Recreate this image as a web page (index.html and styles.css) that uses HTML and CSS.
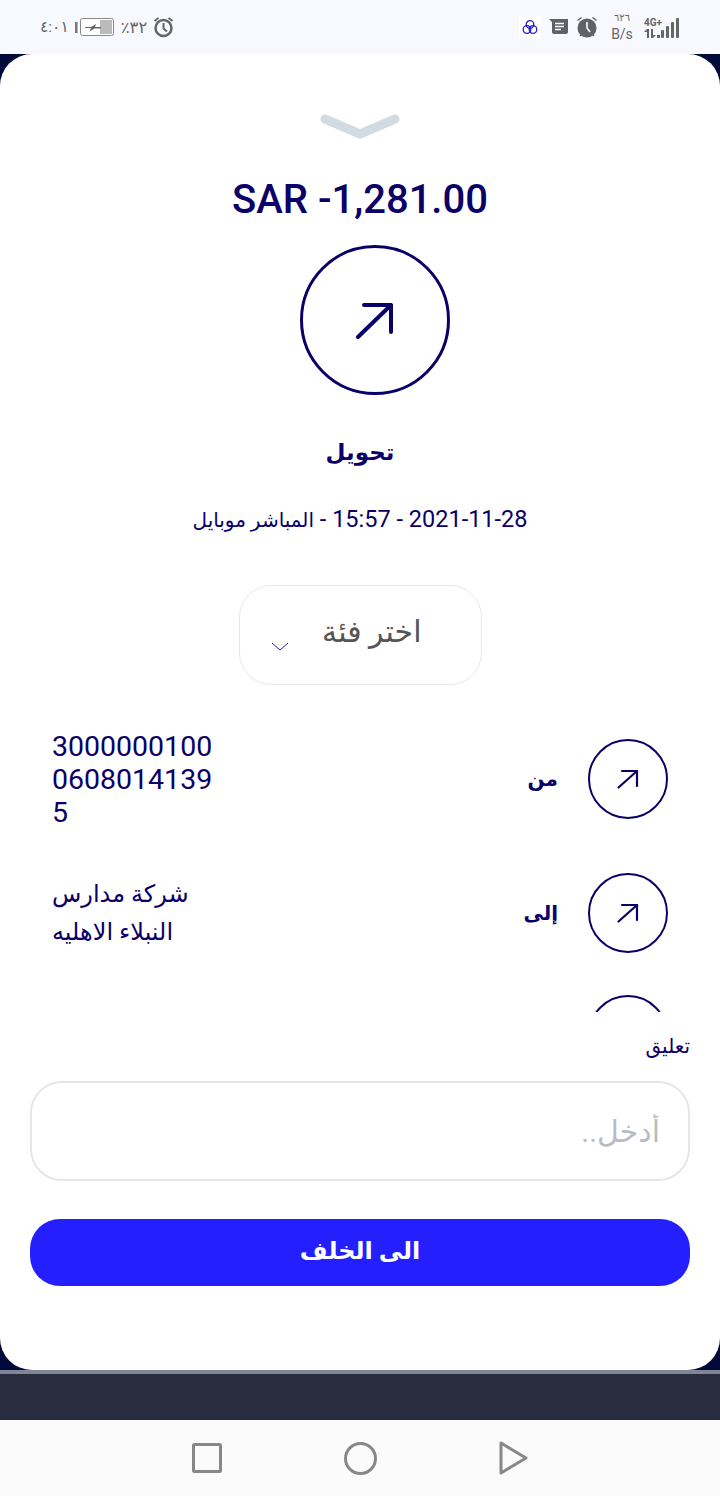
FILE: index.html
```html
<!DOCTYPE html>
<html lang="ar">

<head>
    <meta charset="UTF-8">
    <meta name="viewport" content="width=device-width, initial-scale=1.0">
    <title>تحويل</title>
    <link rel="stylesheet" href="styles.css">
</head>

<body>
    <div class="status-bar">
        <div class="status-left">
            <span class="status-time">٤:٠١</span>
            <svg class="battery" width="40" height="20" viewBox="0 0 40 20">
                <rect x="0" y="5" width="2.500" height="11" fill="#777"/>
                <rect x="5.500" y="1.500" width="33" height="17" rx="2" fill="#fff" stroke="#888" stroke-width="1"/>
                <rect x="25" y="3" width="12" height="14" fill="#bbb"/>
                <path d="M10 10h6l5-3-1 3h6v1.500h-6.500l-5 3 1.500-3.500h-6z" fill="#666"/>
            </svg>
            <span class="status-percent">٪٣٢</span>
            <svg width="21" height="22" viewBox="0 0 21 22" fill="none" stroke="#666">
                <circle cx="10.500" cy="12" r="8" stroke-width="2.500"/>
                <path d="M10.500 7v5.500l3.500 3" stroke-width="2"/>
                <path d="M1.500 5l4-3M19.500 5l-4-3" stroke-width="2"/>
            </svg>
        </div>
        <div class="status-right">
            <div class="app-icon">
                <svg width="16" height="17" viewBox="0 0 16 17" fill="none" stroke="#2a22b8" stroke-width="1.300">
                    <circle cx="8" cy="5.500" r="3.800"/>
                    <circle cx="5" cy="10.500" r="3.800"/>
                    <circle cx="11" cy="10.500" r="3.800"/>
                </svg>
            </div>
            <svg width="19" height="16" viewBox="0 0 19 16">
                <path d="M0 0h19v13a2 2 0 0 1-2 2H5a2 2 0 0 1-2-2V3z" fill="#606266"/>
                <path d="M6 4.500h9M6 7.500h9M6 10.500h6" stroke="#fff" stroke-width="1.600"/>
            </svg>
            <svg width="22" height="22" viewBox="0 0 22 22">
                <circle cx="11" cy="12" r="9.500" fill="#606266"/>
                <path d="M1.500 4.500l4-3M20.500 4.500l-4-3M4 20l2-2M18 20l-2-2" stroke="#606266" stroke-width="1.500"/>
                <path d="M11 6v6l3 4" stroke="#fff" stroke-width="1.600" fill="none"/>
            </svg>
            <div class="speed">
                <span class="speed-value">٦٢٦</span>
                <span class="speed-unit">B/s</span>
            </div>
            <div class="network">
                <div class="network-text">
                    <span class="network-type">4G+</span>
                    <svg width="16" height="9" viewBox="0 0 16 9" fill="#666">
                        <path d="M3 0h2v9H3zM0 3l3-3v3zM7 0h2v9H7zM9 6v3l3-3zM13 6h3v3h-3z"/>
                    </svg>
                </div>
                <svg width="20" height="20" viewBox="0 0 20 20" fill="#666">
                    <rect x="0" y="12" width="3" height="8" rx="1"/>
                    <rect x="5" y="8" width="3" height="12" rx="1"/>
                    <rect x="10" y="4" width="3" height="16" rx="1"/>
                    <rect x="15" y="0" width="3" height="20" rx="1"/>
                </svg>
            </div>
        </div>
    </div>

    <div class="backdrop">
        <div class="sheet">
            <svg class="grabber" width="80" height="26" viewBox="0 0 80 26">
                <path d="M5 6l35 15 35-15" fill="none" stroke="#d2dae2" stroke-width="9" stroke-linecap="round" stroke-linejoin="round"/>
            </svg>

            <h1 class="amount">SAR -1,281.00</h1>

            <div class="circle circle-big">
                <svg width="38" height="38" viewBox="0 0 38 38" fill="none" stroke="#0a0068" stroke-width="4" stroke-linecap="round" stroke-linejoin="round">
                    <path d="M2 36L35 4M8 4h27v27"/>
                </svg>
            </div>

            <div class="title">تحويل</div>
            <div class="meta">2021-11-28 - 15:57 - <span class="meta-source">المباشر موبايل</span></div>

            <div class="category">
                <span class="category-text">اختر فئة</span>
                <svg class="category-arrow" width="18" height="10" viewBox="0 0 18 10" fill="none" stroke="#2a22b8" stroke-width="1">
                    <path d="M1 1l8 7 8-7"/>
                </svg>
            </div>

            <div class="rows">
                <div class="row row-first">
                    <div class="circle circle-small">
                        <svg width="22" height="20" viewBox="0 0 22 20" fill="none" stroke="#0a0068" stroke-width="2.200" stroke-linecap="round">
                            <path d="M1.500 18.500L20 2M5 2h15v15"/>
                        </svg>
                    </div>
                    <div class="row-label">من</div>
                    <div class="row-value row-number">300000010006080141395</div>
                </div>
                <div class="row">
                    <div class="circle circle-small">
                        <svg width="22" height="20" viewBox="0 0 22 20" fill="none" stroke="#0a0068" stroke-width="2.200" stroke-linecap="round">
                            <path d="M1.500 18.500L20 2M5 2h15v15"/>
                        </svg>
                    </div>
                    <div class="row-label">إلى</div>
                    <div class="row-value">شركة مدارس النبلاء الاهليه</div>
                </div>
                <div class="row">
                    <div class="circle circle-small"></div>
                </div>
            </div>

            <div class="comment">
                <label class="comment-label" for="comment">تعليق</label>
                <input class="comment-input" id="comment" type="text" placeholder="أدخل..">
                <button class="back-button" type="button">الى الخلف</button>
            </div>
        </div>
    </div>

    <div class="strip"></div>

    <div class="nav-bar">
        <svg width="30" height="30" viewBox="0 0 30 30" fill="none" stroke="#888" stroke-width="3" stroke-linejoin="round">
            <rect x="1.500" y="1.500" width="27" height="27" rx="1"/>
        </svg>
        <svg width="33" height="33" viewBox="0 0 33 33" fill="none" stroke="#888" stroke-width="3">
            <circle cx="16.500" cy="16.500" r="15"/>
        </svg>
        <svg width="29" height="34" viewBox="0 0 29 34" fill="none" stroke="#888" stroke-width="3" stroke-linejoin="round">
            <path d="M2 2l25 15L2 32z"/>
        </svg>
    </div>
</body>

</html>
```

FILE: styles.css
```css
body {
    margin: 0;
    width: 720px;
    height: 1496px;
    overflow: hidden;
    display: flex;
    flex-direction: column;
    font-family: Roboto, "DejaVu Sans", sans-serif;
    background-color: #ffffff;
    color: #0a0068;
}

/* Status bar */
.status-bar {
    height: 54px;
    flex-shrink: 0;
    display: flex;
    justify-content: space-between;
    align-items: center;
    padding: 0 39px 0 40px;
    background-color: #f8f9fe;
    color: #666;
}

.status-left,
.status-right {
    display: flex;
    align-items: center;
}

.status-left {
    gap: 6px;
}

.status-right {
    gap: 8px;
}

.status-time {
    font-size: 15.500px;
}

.status-percent {
    font-size: 16.500px;
}

.app-icon {
    width: 22px;
    height: 22px;
    display: flex;
    align-items: center;
    justify-content: center;
    background-color: #ffffff;
}

.speed {
    display: flex;
    flex-direction: column;
    align-items: center;
    width: 28px;
    margin-left: 2px;
}

.speed-value {
    font-size: 10px;
    line-height: 14px;
}

.speed-unit {
    font-size: 14px;
    line-height: 18px;
}

.network {
    display: flex;
    align-items: flex-end;
    gap: 1px;
}

.network-text {
    display: flex;
    flex-direction: column;
    width: 16px;
    font-weight: 700;
}

.network-type {
    font-size: 10px;
    line-height: 12px;
}

/* Sheet */
.backdrop {
    flex: 1;
    background-color: #010a38;
}

.sheet {
    height: 1316px;
    box-sizing: border-box;
    display: flex;
    flex-direction: column;
    align-items: center;
    padding-top: 59px;
    background-color: #ffffff;
    border-radius: 32px;
}

.amount {
    margin: 37px 0 0;
    font-size: 40px;
    line-height: 48px;
    font-weight: 500;
}

.circle {
    box-sizing: border-box;
    flex-shrink: 0;
    display: flex;
    align-items: center;
    justify-content: center;
    border-radius: 50%;
    border: 2px solid #0a0068;
    background-color: #ffffff;
}

.circle-big {
    width: 150px;
    height: 150px;
    margin-top: 21px;
    margin-left: 30px;
    border-width: 3px;
}

.title {
    margin-top: 40px;
    font-size: 23px;
    line-height: 36px;
    font-weight: 700;
}

.meta {
    margin-top: 32px;
    font-size: 23.500px;
    line-height: 32px;
    direction: rtl;
}

.meta-source {
    font-size: 20px;
}

.category {
    box-sizing: border-box;
    width: 243px;
    height: 100px;
    margin-top: 49px;
    padding: 0 59px 8px 31px;
    display: flex;
    direction: rtl;
    justify-content: space-between;
    align-items: center;
    border: 1px solid #e8e8ec;
    border-radius: 32px;
}

.category-text {
    font-size: 30px;
    color: #555;
}

.category-arrow {
    margin-top: 32px;
}

/* Rows, cut off by the comment block */
.rows {
    width: 100%;
    box-sizing: border-box;
    height: 327px;
    padding: 43px 52px 0;
    overflow: hidden;
    direction: rtl;
    display: flex;
    flex-direction: column;
    gap: 42px;
}

.row {
    display: flex;
    align-items: center;
    flex-shrink: 0;
}

.row-first {
    height: 102px;
    margin-bottom: 1px;
}

.circle-small {
    width: 80px;
    height: 80px;
}

.row-label {
    margin-right: 30px;
    font-size: 20px;
    font-weight: 700;
}

.row-value {
    margin-right: auto;
    width: 165px;
    font-size: 24px;
    line-height: 38px;
    text-align: left;
}

.row-number {
    font-size: 28.500px;
    line-height: 33px;
    word-break: break-all;
}

/* Comment and button */
.comment {
    width: 100%;
    box-sizing: border-box;
    padding: 20px 30px 0;
    display: flex;
    flex-direction: column;
    direction: rtl;
}

.comment-label {
    font-size: 20px;
    line-height: 28px;
}

.comment-input {
    box-sizing: border-box;
    width: 100%;
    height: 100px;
    margin-top: 21px;
    padding: 0 28px;
    border: 2px solid #e6e6e8;
    border-radius: 32px;
    font-family: inherit;
    font-size: 30px;
    direction: rtl;
    outline: none;
}

.comment-input::placeholder {
    color: #b9bcc4;
}

.back-button {
    height: 67px;
    margin-top: 38px;
    padding-bottom: 4px;
    border: none;
    border-radius: 30px;
    background-color: #241fff;
    color: #ffffff;
    font-family: inherit;
    font-size: 24px;
    font-weight: 700;
}

/* Bottom */
.strip {
    height: 46px;
    flex-shrink: 0;
    border-top: 4px solid #7f8496;
    background-color: #272d3e;
}

.nav-bar {
    height: 76px;
    flex-shrink: 0;
    display: flex;
    align-items: center;
    justify-content: center;
    gap: 122px;
    background-color: #fbfbfb;
}
```
